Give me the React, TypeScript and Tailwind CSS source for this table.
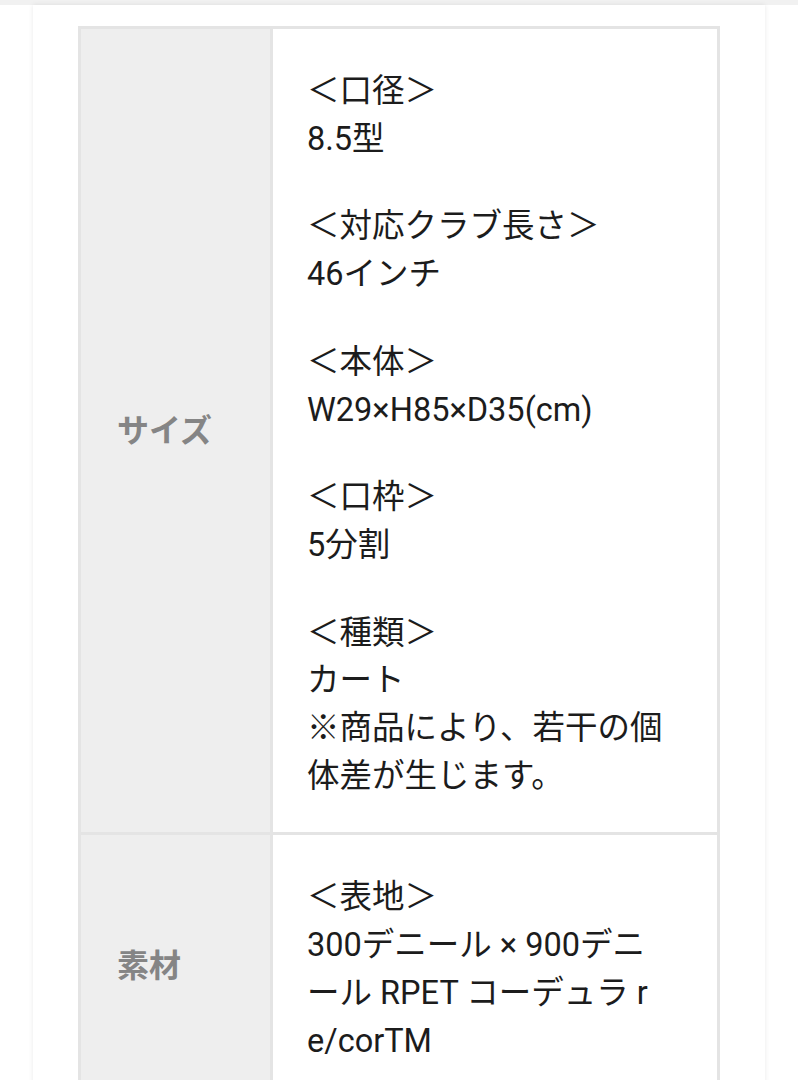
const specs = [
  {
    label: "サイズ",
    blocks: [
      ["＜口径＞", "8.5型"],
      ["＜対応クラブ長さ＞", "46インチ"],
      ["＜本体＞", "W29×H85×D35(cm)"],
      ["＜口枠＞", "5分割"],
      ["＜種類＞", "カート", "※商品により、若干の個", "体差が生じます。"],
    ],
  },
  {
    label: "素材",
    blocks: [["＜表地＞", "300デニール × 900デニ", "ール RPET コーデュラ r", "e/corTM"]],
  },
];

const App = () => {
  return (
    <div
      className="min-h-screen bg-white border-t-[5px] border-[#f1f1f1]"
      style={{ fontFamily: 'Roboto, "Noto Sans CJK JP", sans-serif' }}
    >
      <div className="mx-[33px] min-h-[1075px] bg-white shadow-[0_0_5px_rgba(0,0,0,0.09)] px-[45px] pt-[21px]">
        <div className="grid grid-cols-[189px_1fr] gap-[3px] p-[3px] bg-[#e4e4e4]">
          {specs.map((row) => (
            <div key={row.label} className="contents">
              <div className="bg-[#eeeeee] flex items-center pl-[36px]">
                <span className="text-[32px] font-semibold text-[#858585]">{row.label}</span>
              </div>
              <div className="bg-white pl-[34px] pt-[39px] pb-[32px] flex flex-col gap-[40px]">
                {row.blocks.map((lines, i) => (
                  <div key={i} className="text-[32.5px] leading-[47.7px] text-[#1c1c1c] whitespace-nowrap">
                    {lines.map((line) => (
                      <div key={line}>{line}</div>
                    ))}
                  </div>
                ))}
              </div>
            </div>
          ))}
        </div>
      </div>
    </div>
  );
};

export default App;
